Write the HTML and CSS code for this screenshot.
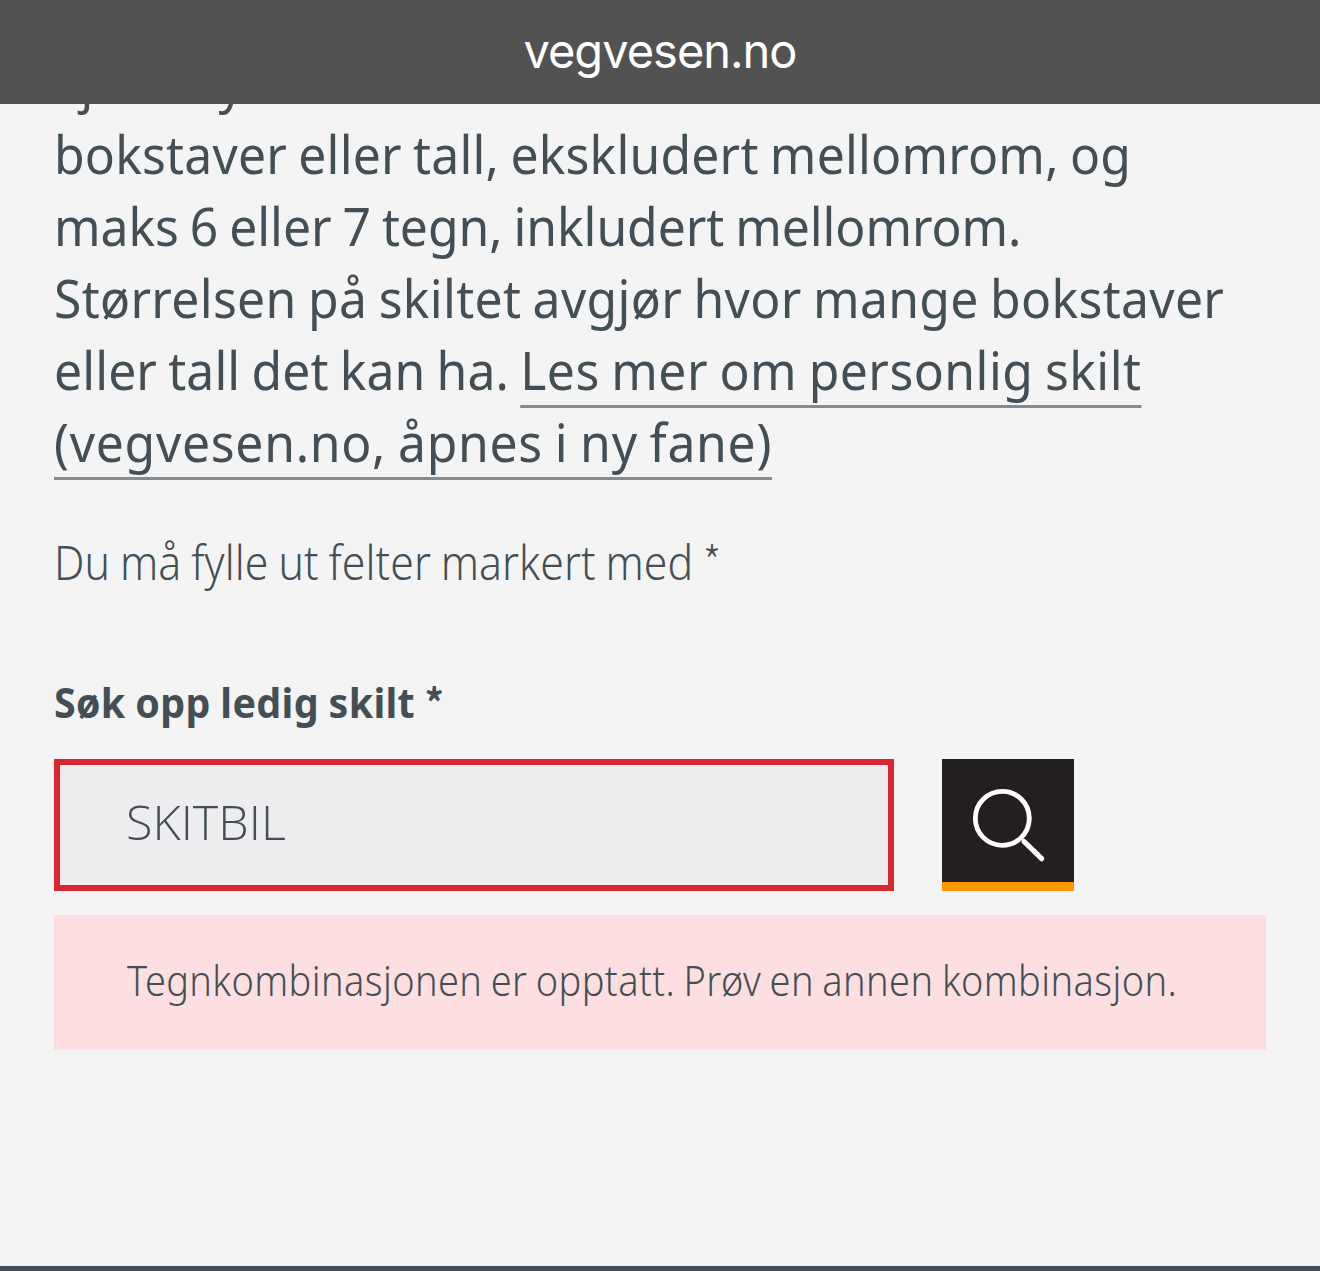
FILE: index.html
```
<!DOCTYPE html>
<html lang="no">
<head>
<meta charset="utf-8">
<title>vegvesen.no</title>
<link rel="stylesheet" href="styles.css">
</head>
<body>
<header class="address-bar"><span class="address">vegvesen.no</span></header>
<main class="content">
  <p class="lead">
    <span class="line">kjøretøy</span>
    <span class="line line-1">bokstaver eller tall, ekskludert mellomrom, og</span>
    <span class="line line-2">maks 6 eller 7 tegn, inkludert mellomrom.</span>
    <span class="line line-3">Størrelsen på skiltet avgjør hvor mange bokstaver</span>
    <span class="line line-4">eller tall det kan ha. <a class="link link-start">Les mer om personlig skilt</a></span>
    <span class="line line-5"><a class="link">(vegvesen.no, åpnes i ny fane)</a></span>
  </p>
  <p class="required-note">Du må fylle ut felter markert med <span class="star">*</span></p>
  <form class="search">
    <label class="label" for="plate">Søk opp ledig skilt <span class="star">*</span></label>
    <div class="search-row">
      <input class="field" id="plate" type="text" value="SKITBIL">
      <button class="search-button" type="button" aria-label="Søk">
        <svg width="132" height="123" viewBox="0 0 132 123" fill="none" stroke="#fff">
          <circle cx="60.3" cy="59.3" r="27" stroke-width="4.8"/>
          <path d="M82 82.5L99.7 99.7" stroke-width="5.2" stroke-linecap="round"/>
        </svg>
      </button>
    </div>
    <div class="alert"><p class="alert-text">Tegnkombinasjonen er opptatt. Prøv en annen kombinasjon.</p></div>
  </form>
</main>
<footer class="footer"></footer>
</body>
</html>
```
FILE: styles.css
```
* {
  box-sizing: border-box;
}

body {
  margin: 0;
  height: 1271px;
  display: flex;
  flex-direction: column;
  overflow: hidden;
  background: #f4f4f4;
  color: #444f55;
  font-family: "Noto Sans", "Open Sans", sans-serif;
}

p {
  margin: 0;
}

.address-bar {
  position: relative;
  z-index: 1;
  flex: none;
  display: flex;
  justify-content: center;
  height: 104px;
  background: #525253;
  color: #fff;
}

.address {
  font: 400 47px/102px Inter, sans-serif;
  letter-spacing: -1px;
}

.content {
  flex: 1;
  margin-top: -58px;
  padding: 0 54px;
}

.lead {
  font-size: 53px;
  line-height: 72px;
  word-spacing: -2px;
  white-space: nowrap;
  transform: scaleX(0.94);
  transform-origin: 0 0;
}

.line {
  display: block;
}

.line-1 { letter-spacing: 0.22px; }
.line-2 { letter-spacing: -0.06px; }
.line-3 { letter-spacing: 0.35px; }
.line-4 { letter-spacing: 0.12px; }
.line-5 { letter-spacing: 0.77px; }

.link {
  text-decoration: underline 3px #868b8e;
  text-underline-offset: 15px;
  text-decoration-skip-ink: none;
}

.link-start {
  letter-spacing: 0.5px;
}

.required-note {
  margin-top: 48px;
  font-size: 47.5px;
  font-weight: 300;
  line-height: 72px;
  letter-spacing: 0.12px;
  word-spacing: -1.5px;
  white-space: nowrap;
  transform: scaleX(0.9);
  transform-origin: 0 0;
}

.star {
  font-family: "Noto Sans CJK SC", sans-serif;
  font-size: 0.95em;
  line-height: 1;
}

.search {
  margin-top: 74px;
}

.label {
  display: block;
  font-size: 41.5px;
  font-weight: 700;
  line-height: 60px;
  letter-spacing: 0.35px;
  word-spacing: -1px;
  transform: scaleX(0.95);
  transform-origin: 0 0;
}

.search-row {
  display: flex;
  gap: 48px;
  margin-top: 27px;
}

.field {
  width: 840px;
  height: 132px;
  padding: 0 66px 8px;
  border: 6px solid #d9272e;
  border-radius: 0;
  background: #ededef;
  color: #444f55;
  font: 300 48.5px "Open Sans", sans-serif;
  outline: none;
}

.search-button {
  width: 132px;
  height: 132px;
  padding: 0;
  border: 0;
  border-bottom: 9px solid #ff9800;
  background: #231f20;
}

.search-button svg {
  display: block;
}

.alert {
  height: 135px;
  margin-top: 24px;
  padding: 35px 0 0 73px;
  background: #fddfe1;
}

.alert-text {
  font-size: 41.5px;
  font-weight: 300;
  line-height: 61px;
  letter-spacing: 0.44px;
  word-spacing: -2px;
  white-space: nowrap;
  transform: scaleX(0.914);
  transform-origin: 0 0;
}

.footer {
  flex: none;
  height: 5px;
  background: #444f55;
}
```
